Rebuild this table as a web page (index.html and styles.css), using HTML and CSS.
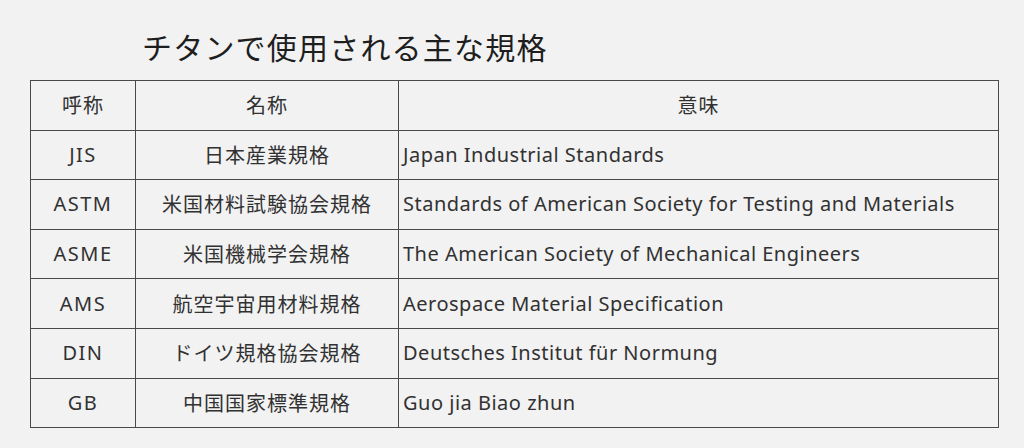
FILE: index.html
```html
<!DOCTYPE html>
<html lang="ja">
<head>
<meta charset="utf-8">
<link rel="stylesheet" href="styles.css">
</head>
<body>
<div class="page">
  <h1 class="title">チタンで使用される主な規格</h1>
  <table class="std">
    <colgroup>
      <col class="c1"><col class="c2"><col class="c3">
    </colgroup>
    <thead>
      <tr><th>呼称</th><th>名称</th><th>意味</th></tr>
    </thead>
    <tbody>
      <tr><td class="ctr code">JIS</td><td class="ctr ja">日本産業規格</td><td>Japan Industrial Standards</td></tr>
      <tr><td class="ctr code">ASTM</td><td class="ctr ja">米国材料試験協会規格</td><td>Standards of American Society for Testing and Materials</td></tr>
      <tr><td class="ctr code">ASME</td><td class="ctr ja">米国機械学会規格</td><td>The American Society of Mechanical Engineers</td></tr>
      <tr><td class="ctr code">AMS</td><td class="ctr ja">航空宇宙用材料規格</td><td>Aerospace Material Specification</td></tr>
      <tr><td class="ctr code">DIN</td><td class="ctr ja">ドイツ規格協会規格</td><td>Deutsches Institut für Normung</td></tr>
      <tr><td class="ctr code">GB</td><td class="ctr ja">中国国家標準規格</td><td>Guo jia Biao zhun</td></tr>
    </tbody>
  </table>
</div>
</body>
</html>
```
FILE: styles.css
```css
html, body {
  margin: 0;
  padding: 0;
  background: #f2f2f2;
}
body {
  width: 1024px;
  height: 448px;
  overflow: hidden;
  font-family: "Noto Sans", "Noto Sans CJK JP", sans-serif;
  color: #313131;
}
.page {
  padding: 0 0 0 30px;
}
.title {
  margin: 0;
  height: 80px;
  display: flex;
  align-items: center;
  padding-left: 112px;
  padding-top: 12px;
  box-sizing: border-box;
  font-family: "Noto Sans CJK JP", sans-serif;
  font-size: 30px;
  font-weight: 400;
  letter-spacing: 1.2px;
  color: #1e1e1e;
}
.std {
  border-collapse: collapse;
  width: 968px;
  table-layout: fixed;
  font-size: 20px;
}
.c1 { width: 105px; }
.c2 { width: 263px; }
.c3 { width: 600px; }
.std th, .std td {
  border: 1px solid #4a4a4a;
  height: 49.6px;
  padding: 0 4px;
  box-sizing: border-box;
  font-weight: 400;
  white-space: nowrap;
  line-height: 1;
  letter-spacing: 0.5px;
}
.std th {
  text-align: center;
  font-family: "Noto Sans CJK JP", sans-serif;
  letter-spacing: 1px;
}
.std td { text-align: left; }
.std td.ctr { text-align: center; }
.std td.code { letter-spacing: 1.5px; }
.std td.ja {
  font-family: "Noto Sans CJK JP", sans-serif;
  letter-spacing: 1px;
}
```
